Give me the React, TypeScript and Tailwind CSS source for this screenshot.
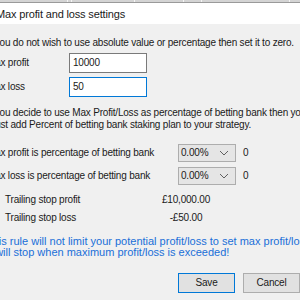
import React from "react"

const ChevronDown = () => (
  <svg width="10" height="6" viewBox="0 0 10 6" fill="none">
    <path d="M1 1l4 4 4-4" stroke="#606060" strokeWidth="1" />
  </svg>
)

const PercentSelect = ({ label }: { label: string }) => (
  <div className="flex h-[18px] items-center">
    <span className="w-[191px] shrink-0">{label}</span>
    <div className="flex h-[18px] w-[58px] items-center justify-between border border-[#adadad] bg-[#e5e5e5] pl-[2px] pr-[6px]">
      <span>0.00%</span>
      <ChevronDown />
    </div>
    <span className="ml-[7px]">0</span>
  </div>
)

const TrailingRow = ({ label, value }: { label: string; value: string }) => (
  <div className="flex h-[18px] items-center">
    <span className="w-[144px] shrink-0 pl-[18px]">{label}</span>
    <span className="w-[110px] text-center">{value}</span>
  </div>
)

export default function App() {
  return (
    <div
      className="h-[300px] w-[300px] overflow-hidden bg-[#f0f0f0] text-[10px] leading-[12px] tracking-[-0.2px] text-[#1a1a1a]"
      style={{ fontFamily: '"Liberation Sans", Arial, sans-serif' }}
    >
      {/* list header peeking out behind the dialog */}
      <div className="flex h-[3px] border-b border-[#9a9a9a] bg-[#d4d4d4]">
        <div className="w-[68px] border-r border-[#f4f4f4]" />
        <div className="w-[4px] border-r border-[#f4f4f4]" />
        <div className="w-[63px] border-r border-[#f4f4f4]" />
        <div className="w-[49px] border-r border-[#f4f4f4]" />
        <div className="w-[18px] border-r border-[#f4f4f4]" />
        <div className="w-[88px] border-r border-[#f4f4f4]" />
      </div>

      <div className="flex h-[21px] items-center bg-white">
        <span className="ml-[-4px] text-[11px] tracking-[-0.15px]">Max profit and loss settings</span>
      </div>

      <div className="ml-[-13px] flex flex-col pt-[13px]">
        <p className="whitespace-nowrap">If you do not wish to use absolute value or percentage then set it to zero.</p>

        <div className="mt-[4px] flex h-[20px] items-center">
          <span className="w-[82px] shrink-0">Max profit</span>
          <div className="flex h-[20px] w-[78px] items-center border border-[#7a7a7a] bg-white pl-[3px]">10000</div>
        </div>
        <div className="mt-[4px] flex h-[20px] items-center">
          <span className="w-[82px] shrink-0">Max loss</span>
          <div className="flex h-[20px] w-[78px] items-center border border-[#0078d7] bg-white pl-[3px]">50</div>
        </div>

        <p className="mt-[10px] whitespace-nowrap">
          If you decide to use Max Profit/Loss as percentage of betting bank then you
          <br />
          must add Percent of betting bank staking plan to your strategy.
        </p>

        <div className="mt-[13px] flex flex-col gap-[5px]">
          <PercentSelect label="Max profit is percentage of betting bank" />
          <PercentSelect label="Max loss is percentage of betting bank" />
        </div>

        <div className="mt-[6px]">
          <TrailingRow label="Trailing stop profit" value="£10,000.00" />
          <TrailingRow label="Trailing stop loss" value="-£50.00" />
        </div>

        <p className="ml-[-1px] mt-[9px] whitespace-nowrap text-[11px] leading-[11px] tracking-normal text-[#1a6fd8]">
          This rule will not limit your potential profit/loss to set max profit/loss
          <br />
          It will stop when maximum profit/loss is exceeded!
        </p>

        <div className="mt-[15px] flex gap-[8px] pl-[191px]">
          <button className="h-[20px] w-[65px] border border-[#0078d7] bg-[#e1e1e1]">Save</button>
          <button className="h-[20px] w-[65px] border border-[#adadad] bg-[#e1e1e1]">Cancel</button>
        </div>
      </div>
    </div>
  )
}
